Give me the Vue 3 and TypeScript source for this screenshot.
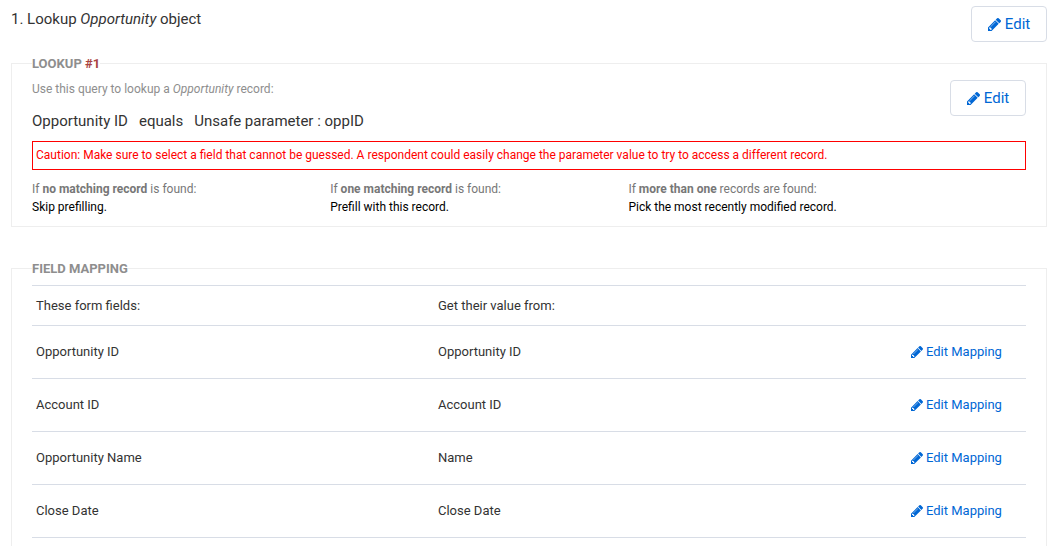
<script setup lang="ts">
import { h } from 'vue'

interface Outcome {
  match: string
  rest: string
  action: string
}

interface Mapping {
  field: string
  source: string
}

const outcomes: Outcome[] = [
  { match: 'no matching record', rest: 'is found:', action: 'Skip prefilling.' },
  { match: 'one matching record', rest: 'is found:', action: 'Prefill with this record.' },
  { match: 'more than one', rest: 'records are found:', action: 'Pick the most recently modified record.' },
]

const mappings: Mapping[] = [
  { field: 'Opportunity ID', source: 'Opportunity ID' },
  { field: 'Account ID', source: 'Account ID' },
  { field: 'Opportunity Name', source: 'Name' },
  { field: 'Close Date', source: 'Close Date' },
]

const PencilIcon = () =>
  h('svg', { viewBox: '128 149 1515 1515', 'aria-hidden': 'true' }, [
    h('path', {
      fill: 'currentColor',
      d: 'M491 1536l91-91-235-235-91 91v107h128v128h107zm523-928q0-22-22-22-10 0-17 7l-542 542q-7 7-7 17 0 22 22 22 10 0 17-7l542-542q7-7 7-17zm-54-192l416 416-832 832h-416v-416zm683 96q0 53-37 90l-166 166-416-416 166-165q36-38 90-38 53 0 91 38l235 234q37 39 37 91z',
    }),
  ])
</script>

<template>
  <main class="page">
    <header class="step">
      <h1>1. Lookup <em>Opportunity</em> object</h1>
      <button type="button" class="edit"><PencilIcon class="icon" />Edit</button>
    </header>

    <fieldset class="panel lookup">
      <legend>LOOKUP <span class="number">#1</span></legend>
      <div class="query">
        <div>
          <p class="hint">Use this query to lookup a <em>Opportunity</em> record:</p>
          <p class="criteria">
            <span>Opportunity ID</span>
            <span>equals</span>
            <span>Unsafe parameter : oppID</span>
          </p>
        </div>
        <button type="button" class="edit"><PencilIcon class="icon" />Edit</button>
      </div>
      <p class="caution">
        Caution: Make sure to select a field that cannot be guessed. A respondent could easily change the parameter value to try to access a different record.
      </p>
      <div class="outcomes">
        <div v-for="outcome in outcomes" :key="outcome.match">
          <p class="condition">If <strong>{{ outcome.match }}</strong> {{ outcome.rest }}</p>
          <p class="action">{{ outcome.action }}</p>
        </div>
      </div>
    </fieldset>

    <fieldset class="panel mapping">
      <legend>FIELD MAPPING</legend>
      <table>
        <thead>
          <tr>
            <th scope="col" class="field">These form fields:</th>
            <th scope="col">Get their value from:</th>
            <td class="edit-cell"></td>
          </tr>
        </thead>
        <tbody>
          <tr v-for="mapping in mappings" :key="mapping.field">
            <td>{{ mapping.field }}</td>
            <td>{{ mapping.source }}</td>
            <td class="edit-cell">
              <a href="#"><PencilIcon class="icon" />Edit Mapping</a>
            </td>
          </tr>
        </tbody>
      </table>
    </fieldset>
  </main>
</template>

<style>
body {
  margin: 0;
  background: #fff;
}
</style>

<style scoped>
.page {
  box-sizing: border-box;
  padding: 6px 7px 0 11px;
  overflow: hidden;
  font-family: Roboto, 'Liberation Sans', sans-serif;
  font-size: 13px;
  line-height: 18px;
  color: #333;
}

h1,
p {
  margin: 0;
  font-weight: 400;
}

.step,
.query {
  display: flex;
  justify-content: space-between;
  align-items: flex-start;
}

h1 {
  padding-top: 4px;
  font-size: 15px;
}

.edit {
  display: inline-flex;
  align-items: center;
  justify-content: center;
  gap: 4px;
  box-sizing: border-box;
  width: 76px;
  height: 36px;
  padding: 0;
  border: 1px solid #d8dde6;
  border-radius: 4px;
  background: #fff;
  color: #0067d5;
  font: inherit;
  font-size: 15px;
  cursor: pointer;
}

.edit .icon {
  width: 13px;
  height: 13px;
}

.panel {
  min-width: 0;
  margin: 0;
  padding: 0 20px;
  border: 1px solid #eee;
}

legend {
  padding: 0;
  font-size: 13px;
  font-weight: 700;
  line-height: 17px;
  color: #8e8e8e;
}

.number {
  color: #a94442;
}

.lookup {
  margin-top: 13px;
  padding-bottom: 10px;
}

.query {
  padding-top: 8px;
}

.hint {
  font-size: 12px;
  color: #8e8e8e;
}

.criteria {
  display: flex;
  gap: 11px;
  padding-top: 13px;
  font-size: 15px;
  line-height: 20px;
}

.caution {
  margin-top: 10px;
  padding: 4px 3px 5px;
  border: 1px solid #f00;
  font-size: 12px;
  color: #f00;
}

.outcomes {
  display: grid;
  grid-template-columns: 3fr 3fr 4fr;
  padding-top: 10px;
  font-size: 12px;
}

.condition {
  color: #777;
}

.action {
  color: #000;
}

.mapping {
  margin-top: 33px;
  padding-bottom: 20px;
}

table {
  width: 100%;
  margin-top: 8px;
  border-collapse: collapse;
  table-layout: fixed;
}

th,
td {
  height: 52px;
  padding: 0 4px;
  border-bottom: 1px solid #d8dde6;
  font-weight: 400;
  text-align: left;
}

thead th,
thead td {
  height: 39px;
  border-top: 1px solid #d8dde6;
}

.field {
  width: 402px;
  box-sizing: border-box;
}

.edit-cell {
  box-sizing: border-box;
  width: 119px;
}

a {
  display: flex;
  align-items: center;
  gap: 3px;
  color: #0067d5;
  text-decoration: none;
}

a .icon {
  width: 12px;
  height: 12px;
}
</style>
